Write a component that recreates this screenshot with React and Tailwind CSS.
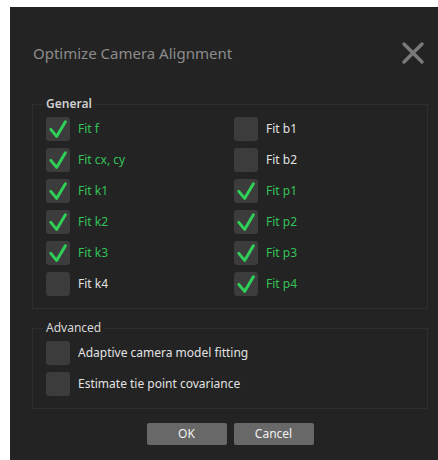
import { X } from 'lucide-react';

const general = [
  ['Fit f', true, 'Fit b1', false],
  ['Fit cx, cy', true, 'Fit b2', false],
  ['Fit k1', true, 'Fit p1', true],
  ['Fit k2', true, 'Fit p2', true],
  ['Fit k3', true, 'Fit p3', true],
  ['Fit k4', false, 'Fit p4', true],
];

const advanced = ['Adaptive camera model fitting', 'Estimate tie point covariance'];

const Check = ({ label, checked }) => (
  <div className="flex items-center gap-2 h-6">
    <div className="w-6 h-6 rounded-[3px] bg-[#3c3c3c] shrink-0 flex items-center justify-center">
      {checked && (
        <svg width="24" height="24" viewBox="0 0 24 24" fill="none">
          <path
            d="M4.8 12.4 L10.6 19.4 L19.4 4.8"
            stroke="#2fcf58"
            strokeWidth="3"
            strokeLinecap="round"
            strokeLinejoin="round"
          />
        </svg>
      )}
    </div>
    <span className={checked ? 'text-[#33c258]' : 'text-[#e2e2e2]'}>{label}</span>
  </div>
);

const App = () => {
  return (
    <div className="w-[438px] h-[460px] bg-white pt-[7px] pl-[10px] font-['Noto_Sans',sans-serif] text-[12px]">
      <div className="w-[428px] h-[453px] bg-[#232323] pl-[22px] pr-[10px]">
        {/* Title bar */}
        <div className="flex items-center justify-between h-[71px] pt-[21px] pl-[1px]">
          <h1 className="text-[15px] text-[#8c8c8c] leading-none">Optimize Camera Alignment</h1>
          <X className="w-[36px] h-[36px] text-[#7a7a7a] mr-[-3px]" strokeWidth={2.3} />
        </div>

        <div className="w-[396px] mt-[18px]">
          {/* General */}
          <fieldset className="border border-[#2e2e2e] px-[13px] pb-[12px]">
            <legend className="ml-[-3px] px-[3px] text-[#cfcfcf] font-semibold leading-[16px]">General</legend>
            <div className="grid grid-cols-[188px_1fr] gap-y-[7px] mt-[5px]">
              {general.map(([a, ac, b, bc]) => (
                <div key={a} className="contents">
                  <Check label={a} checked={ac} />
                  <Check label={b} checked={bc} />
                </div>
              ))}
            </div>
          </fieldset>

          {/* Advanced */}
          <fieldset className="border border-[#2e2e2e] px-[13px] pb-[12px] mt-[11px]">
            <legend className="ml-[-3px] px-[3px] text-[#d8d8d8] leading-[16px]">Advanced</legend>
            <div className="flex flex-col gap-[7px] mt-[5px]">
              {advanced.map((l) => (
                <Check key={l} label={l} checked={false} />
              ))}
            </div>
          </fieldset>

          <div className="flex justify-center gap-[7px] mt-[14px]">
            <button className="w-[80px] h-[22px] rounded-[2px] bg-[#686868] text-[#f0f0f0]">OK</button>
            <button className="w-[80px] h-[22px] rounded-[2px] bg-[#686868] text-[#f0f0f0]">Cancel</button>
          </div>
        </div>
      </div>
    </div>
  );
};

export default App;
